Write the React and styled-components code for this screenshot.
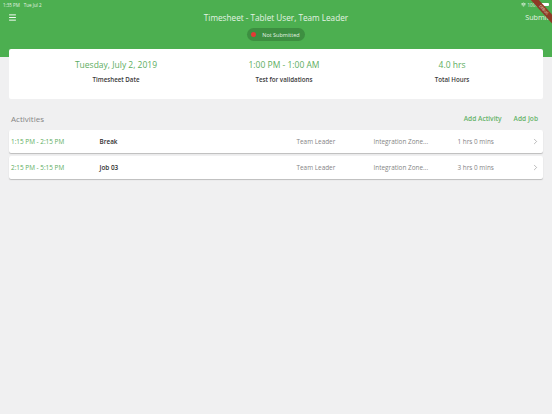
import styled, { createGlobalStyle } from 'styled-components';
import { ChevronRight, Menu, Wifi } from 'lucide-react';

const activities = [
  { time: '1:15 PM - 2:15 PM', name: 'Break', role: 'Team Leader', zone: 'Integration Zone...', length: '1 hrs 0 mins' },
  { time: '2:15 PM - 5:15 PM', name: 'Job 03', role: 'Team Leader', zone: 'Integration Zone...', length: '3 hrs 0 mins' },
];

const summary = [
  { value: 'Tuesday, July 2, 2019', label: 'Timesheet Date' },
  { value: '1:00 PM - 1:00 AM', label: 'Test for validations' },
  { value: '4.0 hrs', label: 'Total Hours' },
];

const GlobalStyle = createGlobalStyle`
  html, body {
    margin: 0;
    padding: 0;
    background: #f0f0f1;
    font-family: "Open Sans", "Liberation Sans", sans-serif;
  }
`;

const Page = styled.div`
  position: relative;
  width: 552px;
  height: 414px;
  overflow: hidden;
  background: #f0f0f1;
`;

const Header = styled.header`
  height: 57px;
  box-sizing: border-box;
  background: #4caf50;
  color: #e9f5e9;
  display: flex;
  flex-direction: column;
`;

const StatusBar = styled.div`
  height: 9px;
  padding: 0 3px;
  display: flex;
  align-items: center;
  justify-content: space-between;
  font-size: 4.5px;
  color: #e4f3e4;
`;

const StatusGroup = styled.div`
  display: flex;
  align-items: center;
  gap: ${(props) => props.$gap || 4}px;
`;

const Battery = styled.span`
  width: 8px;
  height: 3.5px;
  border-radius: 1px;
  background: #fff;
`;

const TitleRow = styled.div`
  height: 16px;
  padding: 0 8px;
  display: grid;
  grid-template-columns: 40px 1fr 40px;
  align-items: center;
`;

const MenuButton = styled.div`
  display: flex;
  align-items: center;
  color: #fff;
`;

const Title = styled.h1`
  margin: 0;
  font-size: 8.2px;
  font-weight: 400;
  text-align: center;
  white-space: nowrap;
  color: #e4f3e4;
`;

const SubmitLink = styled.span`
  font-size: 7.2px;
  text-align: right;
  color: #e4f3e4;
  margin-right: -5px;
`;

const StatusRow = styled.div`
  display: flex;
  justify-content: center;
  margin-top: 3px;
`;

const StatusPill = styled.div`
  height: 13px;
  padding: 0 5px 0 4px;
  display: flex;
  align-items: center;
  gap: 6px;
  border-radius: 7px;
  background: #3d8f41;
  font-size: 5.5px;
  color: #e4f3e4;
`;

const StatusDot = styled.span`
  width: 5px;
  height: 5px;
  border-radius: 50%;
  background: #e53935;
`;

const Ribbon = styled.div`
  position: absolute;
  top: 7px;
  right: -22px;
  width: 60px;
  height: 5.5px;
  background: #8d3a26;
  color: #f3e3dc;
  font-size: 3.5px;
  line-height: 5.5px;
  text-align: center;
  transform: rotate(48deg);
`;

const SummaryCard = styled.section`
  position: relative;
  margin: -8px 9px 0;
  height: 50px;
  box-sizing: border-box;
  padding: 10px 7px 0 23px;
  background: #fff;
  border-radius: 2px;
  display: grid;
  grid-template-columns: repeat(3, 1fr);
`;

const SummaryItem = styled.div`
  display: flex;
  flex-direction: column;
  align-items: center;
  gap: 4px;
`;

const SummaryValue = styled.div`
  font-size: 8.5px;
  line-height: 12px;
  color: #5cad60;
`;

const SummaryLabel = styled.div`
  font-size: 6.2px;
  line-height: 9px;
  font-weight: 600;
  color: #3a3a3a;
`;

const ActivitiesHead = styled.div`
  margin: 13px 9px 0;
  height: 13px;
  padding: 0 5px 0 2px;
  display: flex;
  align-items: center;
  justify-content: space-between;
`;

const SectionTitle = styled.h2`
  margin: 0;
  font-size: 8px;
  font-weight: 400;
  color: #858585;
`;

const HeadActions = styled.div`
  display: flex;
  gap: 12px;
`;

const ActionLink = styled.span`
  font-size: 6.6px;
  font-weight: 600;
  color: #66b36a;
`;

const ActivityList = styled.div`
  margin: 5px 9px 0;
  display: flex;
  flex-direction: column;
  gap: 3px;
`;

const ActivityRow = styled.div`
  height: 23px;
  padding-left: 2px;
  display: grid;
  grid-template-columns: 88.5px 197px 77px 84px 1fr 12px;
  align-items: center;
  background: #fff;
  border-radius: 2px;
  box-shadow: 0 1px 1px rgba(0, 0, 0, 0.22);
  font-size: 6.4px;
  color: #858585;
`;

const TimeCell = styled.span`
  color: #5cad60;
  white-space: nowrap;
`;

const NameCell = styled.span`
  font-weight: 600;
  color: #2e2e2e;
`;

const PlainCell = styled.span`
  white-space: nowrap;
`;

const App = () => (
  <Page>
    <GlobalStyle />
    <Header>
      <StatusBar>
        <StatusGroup>
          <span>1:35 PM</span>
          <span>Tue Jul 2</span>
        </StatusGroup>
        <StatusGroup $gap={2}>
          <Wifi size={5} strokeWidth={3} color="#fff" />
          <span>100%</span>
          <Battery />
        </StatusGroup>
      </StatusBar>
      <TitleRow>
        <MenuButton>
          <Menu size={9} strokeWidth={2.5} />
        </MenuButton>
        <Title>Timesheet - Tablet User, Team Leader</Title>
        <SubmitLink>Submit</SubmitLink>
      </TitleRow>
      <StatusRow>
        <StatusPill>
          <StatusDot />
          Not Submitted
        </StatusPill>
      </StatusRow>
    </Header>
    <Ribbon>DEBUG</Ribbon>
    <SummaryCard>
      {summary.map((item) => (
        <SummaryItem key={item.label}>
          <SummaryValue>{item.value}</SummaryValue>
          <SummaryLabel>{item.label}</SummaryLabel>
        </SummaryItem>
      ))}
    </SummaryCard>
    <ActivitiesHead>
      <SectionTitle>Activities</SectionTitle>
      <HeadActions>
        <ActionLink>Add Activity</ActionLink>
        <ActionLink>Add Job</ActionLink>
      </HeadActions>
    </ActivitiesHead>
    <ActivityList>
      {activities.map((row) => (
        <ActivityRow key={row.name}>
          <TimeCell>{row.time}</TimeCell>
          <NameCell>{row.name}</NameCell>
          <PlainCell>{row.role}</PlainCell>
          <PlainCell>{row.zone}</PlainCell>
          <PlainCell>{row.length}</PlainCell>
          <ChevronRight size={9} strokeWidth={1.3} color="#777" />
        </ActivityRow>
      ))}
    </ActivityList>
  </Page>
);

export default App;
